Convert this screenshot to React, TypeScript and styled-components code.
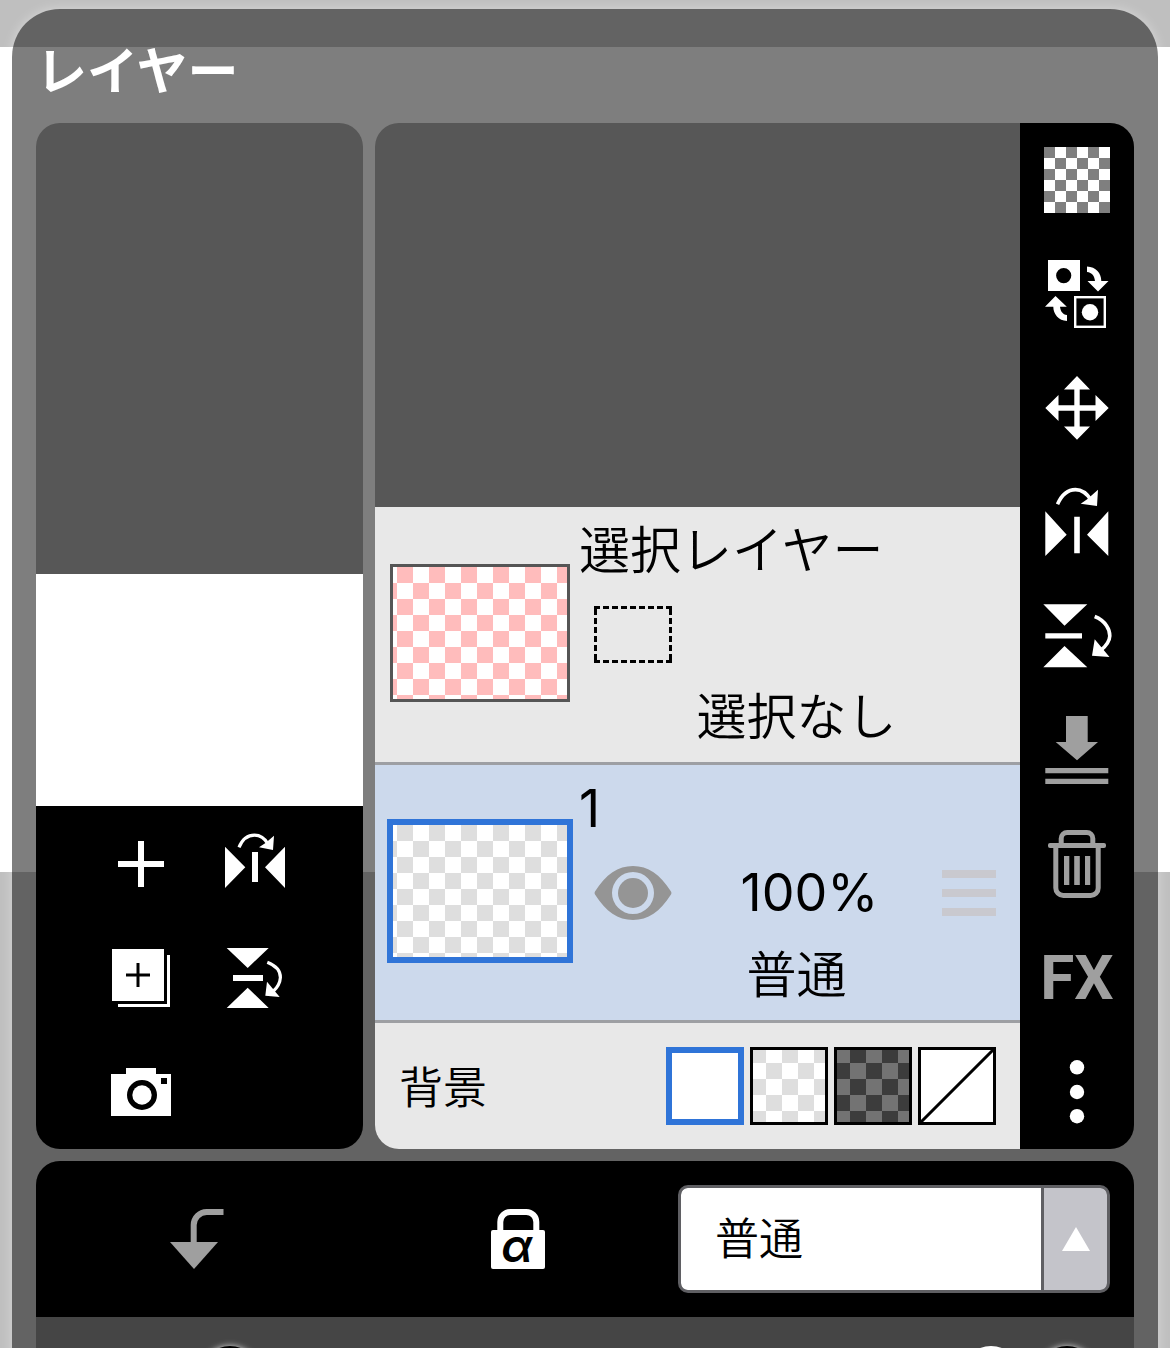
import React, { useState } from 'react';
import styled, { createGlobalStyle, css } from 'styled-components';

const GlobalStyle = createGlobalStyle`
  *, *::before, *::after { box-sizing: border-box; }
  body {
    margin: 0;
    font-family: Inter, "Noto Sans CJK JP", sans-serif;
    color: #000;
  }
  button, select, input { font: inherit; color: inherit; }
`;

const BLUE = '#2f74d8';
const MUTED = '#9f9f9f';

const checker = (a: string, b: string) =>
  `conic-gradient(${b} 25%, ${a} 0 50%, ${b} 0 75%, ${a} 0)`;

const Page = styled.div`
  height: 100vh;
  padding: 9px 12px 0;
  overflow: hidden;
  background: linear-gradient(#bfbfbf 47px, #fff 47px 872px, #bfbfbf 872px);
`;

const Panel = styled.main`
  min-height: 100%;
  padding: 0 24px;
  border-radius: 48px 48px 0 0;
  background: rgba(32, 32, 32, 0.58);
  box-shadow: 0 0 12px rgba(255, 255, 255, 0.4);
`;

const Title = styled.h1`
  margin: 0;
  padding: 27px 0 15px;
  font-size: 51px;
  line-height: 72px;
  font-weight: 700;
  color: #fff;
`;

const Workspace = styled.div`
  display: flex;
  gap: 12px;
`;

const PreviewColumn = styled.section`
  flex: 0 0 327px;
  display: flex;
  flex-direction: column;
  overflow: hidden;
  border-radius: 24px;
  background: #575757;
`;

const CanvasPreview = styled.div`
  height: 232px;
  margin-top: auto;
  background: #fff;
`;

const PreviewTools = styled.div`
  display: grid;
  grid-template-columns: 114px 114px;
  padding: 1px 48px 0;
  background: #000;
`;

const LayerCard = styled.section`
  flex: 1;
  min-width: 0;
  display: flex;
  overflow: hidden;
  border-radius: 24px;
  background: #575757;
`;

const LayerList = styled.div`
  flex: 1;
  min-width: 0;
  display: flex;
  flex-direction: column;
  justify-content: flex-end;
`;

const LayerRow = styled.article<{ $selected?: boolean }>`
  display: grid;
  grid-template-columns: 198px minmax(0, 1fr);
  border-bottom: 3px solid #9d9fa3;
  background: ${(p) => (p.$selected ? '#ccd9ec' : '#e8e8e8')};
`;

const Thumb = styled.button<{ $tint: string; $selected?: boolean }>`
  align-self: center;
  justify-self: end;
  width: ${(p) => (p.$selected ? 186 : 180)}px;
  height: ${(p) => (p.$selected ? 144 : 138)}px;
  margin-right: ${(p) => (p.$selected ? 0 : 3)}px;
  margin-bottom: 3px;
  padding: 0;
  border: ${(p) => (p.$selected ? `6px solid ${BLUE}` : '3px solid #555')};
  background: ${(p) => checker(p.$tint, '#fff')} 4px 0 / 32px 32px;
`;

const Details = styled.div`
  display: grid;
  grid-template-columns: 120px minmax(0, 1fr) 102px;
  grid-template-rows: 88px 79px 85px;
  align-items: center;
  justify-items: center;
  padding-bottom: 3px;
`;

const LayerName = styled.h2`
  grid-column: 1 / -1;
  justify-self: start;
  margin: 0;
  padding-left: 6px;
  font-size: 51px;
  line-height: 72px;
  font-weight: 350;
`;

const NumberText = styled.span`
  font-size: 52px;
  font-weight: 400;
`;

const TextButton = styled.button<{ $wide?: boolean }>`
  padding: 0;
  border: 0;
  background: none;
  font-size: 50px;
  line-height: 72px;
  font-weight: 350;
  ${(p) => p.$wide && css`grid-column: 1 / -1;`}
`;

const OpacityValue = styled(TextButton)`
  padding-left: 8px;
`;

const PlainButton = styled.button`
  display: flex;
  padding: 0;
  border: 0;
  background: none;
`;

const BackgroundRow = styled.fieldset`
  display: flex;
  align-items: center;
  gap: 6px;
  margin: 0;
  padding: 24px;
  border: 0;
  background: #e8e8e8;
`;

const BackgroundLabel = styled.span`
  margin-right: auto;
  padding-top: 4px;
  font-size: 44px;
  line-height: 72px;
  font-weight: 350;
`;

const swatchFill = {
  white: '#fff',
  light: `${checker('#dedede', '#fff')} 0 0 / 32px 32px border-box`,
  dark: `${checker('#737373', '#3c3c3c')} 0 0 / 32px 32px border-box`,
  none: 'linear-gradient(to bottom right, #fff calc(50% - 2px), #000 calc(50% - 1px) calc(50% + 1px), #fff calc(50% + 2px))',
};

type Fill = keyof typeof swatchFill;

const Swatch = styled.input<{ $fill: Fill }>`
  appearance: none;
  width: 78px;
  height: 78px;
  margin: 0;
  border: 3px solid #000;
  background: ${(p) => swatchFill[p.$fill]};
  &:checked { border: 6px solid ${BLUE}; }
`;

const ToolRail = styled.nav`
  display: flex;
  flex-direction: column;
  background: #000;
`;

const ToolButton = styled.button<{ $muted?: boolean }>`
  display: flex;
  align-items: center;
  justify-content: center;
  min-width: 114px;
  height: 114px;
  padding: 0;
  border: 0;
  background: none;
  color: ${(p) => (p.$muted ? MUTED : '#fff')};
`;

const Transparency = styled.span`
  width: 66px;
  height: 66px;
  background: ${checker('#7f7f7f', '#fff')} 0 0 / 22px 22px;
`;

const FxText = styled.span`
  font-family: Roboto, "Liberation Sans", sans-serif;
  font-size: 62px;
  line-height: 72px;
  font-weight: 700;
`;

const Controls = styled.section`
  margin-top: 12px;
  overflow: hidden;
  border-radius: 24px 24px 0 0;
  background: #454545;
`;

const ControlBar = styled.div`
  display: grid;
  grid-template-columns: 1fr 1fr 432px;
  align-items: center;
  justify-items: center;
  padding: 21px 24px 21px 0;
  background: #000;
`;

const SelectBox = styled.label`
  display: flex;
  width: 100%;
  height: 108px;
  overflow: hidden;
  border: 3px solid #5f5f63;
  border-radius: 10px;
  background: #5f5f63;
`;

const Select = styled.select`
  appearance: none;
  flex: 1;
  min-width: 0;
  padding: 0 34px;
  border: 0;
  border-radius: 6px 0 0 6px;
  background: #fff;
  font-size: 44px;
  font-weight: 350;
`;

const SelectArrow = styled.span`
  display: flex;
  align-items: center;
  justify-content: center;
  width: 63px;
  margin-left: 3px;
  border-radius: 0 6px 6px 0;
  background: #c4c4ca;
`;

const OpacityBar = styled.div`
  display: flex;
  align-items: center;
  gap: 16px;
  padding: 29px 37px 30px 164px;
`;

const StepButton = styled.button`
  flex: none;
  width: 60px;
  height: 60px;
  padding: 0;
  border: 0;
  border-radius: 50%;
  background: #000;
  box-shadow: 0 0 6px rgba(255, 255, 255, 0.8);
  color: #fff;
`;

const OpacityRange = styled.input`
  appearance: none;
  flex: 1;
  min-width: 0;
  height: 60px;
  margin: 0;
  background: linear-gradient(#8a8a8a, #8a8a8a) center / 100% 6px no-repeat;
  &::-webkit-slider-thumb {
    appearance: none;
    width: 60px;
    height: 60px;
    border-radius: 50%;
    background: #fff;
  }
`;

const Glyph = ({ children }: { children: React.ReactNode }) => (
  <svg width="72" height="72" viewBox="0 0 72 72" fill="currentColor" aria-hidden="true">
    {children}
  </svg>
);

const SwapIcon = () => (
  <Glyph>
    <path fillRule="evenodd" d="M7 2H39V33H7ZM22.7 10A7.6 7.6 0 1 0 22.7 25.2A7.6 7.6 0 1 0 22.7 10Z" />
    <path d="M46 8.5C55 9 60.3 15 60.3 23H67.5L57 33.5L46.5 23H54C53.5 18 51 14.5 46 14Z" />
    <path d="M14.5 38L25.8 48.7H19C19.5 53 21.5 56.5 26 57V63C17.5 62.5 12.3 56 12.3 48.7H4Z" />
    <rect x="34.2" y="39.2" width="29.6" height="29.6" fill="none" stroke="currentColor" strokeWidth="2.4" />
    <circle cx="49" cy="54.2" r="8.2" />
  </Glyph>
);

const MoveIcon = () => (
  <Glyph>
    <path d="M36 4L49 17.5H38.7V33.3H54.5V23L67.7 36L54.5 49V38.7H38.7V54.5H49L36 67.7L23 54.5H33.3V38.7H17.5V49L4.3 36L17.5 23V33.3H33.3V17.5H23Z" />
  </Glyph>
);

const FlipHIcon = () => (
  <Glyph>
    <path d="M4.3 25.3L25.7 48.7L4.3 70ZM67.3 25.3L46 48.7L67.3 70ZM33.2 30.7H38.8V67.3H33.2ZM57 3.7L56 20L39.7 17.7L46.5 13Z" />
    <path d="M16.5 18.3C21 8 27.5 3.6 34.5 3.6C41 3.6 46 7.5 50 14" fill="none" stroke="currentColor" strokeWidth="3.6" />
  </Glyph>
);

const FlipVIcon = () => (
  <Glyph>
    <path d="M2.3 4.3H46.3L23.5 25.7ZM23.5 46L46.3 67.2H2.3ZM4.3 33.2H41V38.6H4.3ZM53.7 39.3L68.5 57L51 55.7Z" />
    <path d="M53.7 16.5C65 21 69 30 68.8 36C68.5 42 65 46 60 50" fill="none" stroke="currentColor" strokeWidth="3.6" />
  </Glyph>
);

const MergeIcon = () => (
  <Glyph>
    <path d="M25 2H46.7V28H57L36 46.3L14.7 28H25ZM4.3 54H67.3V59.3H4.3ZM4.3 64.7H67.3V70H4.3Z" />
  </Glyph>
);

const TrashIcon = () => (
  <Glyph>
    <path
      d="M20.2 17V10.5A6 6 0 0 1 26.2 4.5H45.8A6 6 0 0 1 51.8 10.5V17M14.8 17V60A7.5 7.5 0 0 0 22.3 67.5H49.7A7.5 7.5 0 0 0 57.2 60V17"
      fill="none"
      stroke="currentColor"
      strokeWidth="5"
    />
    <rect x="7" y="15" width="58" height="5" rx="2" />
    <path d="M23 28H28.3V57H23ZM33.2 28H38.8V57H33.2ZM44 28H49.2V57H44Z" />
  </Glyph>
);

const MoreIcon = () => (
  <Glyph>
    <circle cx="36" cy="11.3" r="7.2" />
    <circle cx="36" cy="36" r="7.2" />
    <circle cx="36" cy="60.2" r="7.2" />
  </Glyph>
);

const PlusIcon = () => (
  <Glyph>
    <path d="M33 13H39V33H59V39H39V59H33V39H13V33H33Z" />
  </Glyph>
);

const CanvasFlipHIcon = () => (
  <Glyph>
    <path d="M6 18.7L26.3 39.3L6 60ZM66 18.7L46 39.3L66 60ZM33 24H39V54H33ZM55 7.7L54 22L40 19.3L46.5 15Z" />
    <path d="M20 19.3C24 10 30 7.2 35.5 7.2C41 7.2 45.5 10 49 16" fill="none" stroke="currentColor" strokeWidth="3.2" />
  </Glyph>
);

const CanvasFlipVIcon = () => (
  <Glyph>
    <path d="M7.7 6H49.7L28.7 26ZM28.7 45.7L49.7 66H7.7ZM14 33H44V39H14ZM48 39.7L60.7 55L46.3 53.7Z" />
    <path d="M48.3 20.2C58 24 61.5 30 61.4 35.5C61 42 58 46 54 49.5" fill="none" stroke="currentColor" strokeWidth="3.2" />
  </Glyph>
);

const DuplicateIcon = () => (
  <Glyph>
    <path fillRule="evenodd" d="M7 7H59V59H7ZM31.5 21V31.5H21V34.5H31.5V45H34.5V34.5H45V31.5H34.5V21Z" />
    <path d="M62 13H65V65H13V62H62Z" />
  </Glyph>
);

const CameraIcon = () => (
  <Glyph>
    <path fillRule="evenodd" d="M6 18H21V12H51V18H66V60H6ZM56 22V28H62V22ZM37 24A15 15 0 1 0 37 54A15 15 0 1 0 37 24Z" />
    <circle cx="37" cy="39" r="9.7" />
  </Glyph>
);

const ClipIcon = () => (
  <Glyph>
    <path d="M9 39H57L33 66Z" />
    <path d="M32.7 40V22A13 13 0 0 1 45.7 9H62.5" fill="none" stroke="currentColor" strokeWidth="6" />
  </Glyph>
);

const AlphaLockIcon = () => (
  <Glyph>
    <path d="M18.3 30V19A10 10 0 0 1 28.3 9H44.3A10 10 0 0 1 54.3 19V30" fill="none" stroke="currentColor" strokeWidth="6" />
    <rect x="9" y="27" width="54" height="39" rx="2" />
    <text x="35" y="59" textAnchor="middle" fill="#000" fontFamily="Inter, sans-serif" fontStyle="italic" fontWeight="600" fontSize="46">
      α
    </text>
  </Glyph>
);

const EyeIcon = () => (
  <svg width="78" height="56" viewBox="0 0 78 56" fill="#959595" aria-hidden="true">
    <path
      fillRule="evenodd"
      d="M1 26.5C12 9 24 1 39 1S66 9 77 26.5Q78 28 77 29.5C66 47 54 55 39 55S12 47 1 29.5Q0 28 1 26.5ZM39 7A21 21 0 1 0 39 49A21 21 0 1 0 39 7Z"
    />
    <circle cx="39" cy="28" r="15" />
  </svg>
);

const SelectionIcon = () => (
  <svg width="78" height="57" viewBox="0 0 78 57" fill="none" stroke="#000" strokeWidth="3" aria-hidden="true">
    <path d="M0 1.5H78M0 55.5H78" strokeDasharray="6 3" />
    <path d="M1.5 0V57M76.5 0V57" strokeDasharray="9 3 6 3 6 3 6 3 6 3 9 3" />
  </svg>
);

const HandleIcon = () => (
  <svg width="54" height="48" viewBox="0 0 54 48" fill="#c9c9cf" aria-hidden="true">
    <path d="M0 1H54V9H0ZM0 20H54V28H0ZM0 39H54V47H0Z" />
  </svg>
);

const previewTools = [
  { label: 'レイヤーを追加', Icon: PlusIcon },
  { label: 'キャンバスを左右反転', Icon: CanvasFlipHIcon },
  { label: 'レイヤーを複製', Icon: DuplicateIcon },
  { label: 'キャンバスを上下反転', Icon: CanvasFlipVIcon },
  { label: 'カメラ', Icon: CameraIcon },
];

const railTools = [
  { label: '透明', Icon: Transparency },
  { label: '入れ替え', Icon: SwapIcon },
  { label: '移動', Icon: MoveIcon },
  { label: '左右反転', Icon: FlipHIcon },
  { label: '上下反転', Icon: FlipVIcon },
  { label: '結合', Icon: MergeIcon, muted: true },
  { label: '削除', Icon: TrashIcon, muted: true },
  { label: 'FX', Icon: () => <FxText>FX</FxText>, muted: true },
  { label: 'その他', Icon: MoreIcon },
];

const backgrounds: { fill: Fill; label: string }[] = [
  { fill: 'white', label: '白' },
  { fill: 'light', label: '明るい格子' },
  { fill: 'dark', label: '暗い格子' },
  { fill: 'none', label: 'なし' },
];

export default function App() {
  const [background, setBackground] = useState<Fill>('white');

  return (
    <>
      <GlobalStyle />
      <Page lang="ja">
        <Panel>
          <Title>レイヤー</Title>
          <Workspace>
            <PreviewColumn>
              <CanvasPreview />
              <PreviewTools>
                {previewTools.map(({ label, Icon }) => (
                  <ToolButton key={label} type="button" aria-label={label}>
                    <Icon />
                  </ToolButton>
                ))}
              </PreviewTools>
            </PreviewColumn>
            <LayerCard>
              <LayerList>
                <LayerRow>
                  <Thumb type="button" aria-label="選択レイヤー" $tint="#ffbcbc" />
                  <Details>
                    <LayerName>選択レイヤー</LayerName>
                    <SelectionIcon />
                    <TextButton type="button" $wide>選択なし</TextButton>
                  </Details>
                </LayerRow>
                <LayerRow $selected>
                  <Thumb type="button" aria-label="レイヤー 1" $tint="#dedede" $selected />
                  <Details>
                    <LayerName><NumberText>1</NumberText></LayerName>
                    <PlainButton type="button" aria-label="表示">
                      <EyeIcon />
                    </PlainButton>
                    <OpacityValue type="button"><NumberText>100%</NumberText></OpacityValue>
                    <PlainButton type="button" aria-label="並べ替え">
                      <HandleIcon />
                    </PlainButton>
                    <TextButton type="button" $wide>普通</TextButton>
                  </Details>
                </LayerRow>
                <BackgroundRow aria-labelledby="background-label">
                  <BackgroundLabel id="background-label">背景</BackgroundLabel>
                  {backgrounds.map(({ fill, label }) => (
                    <Swatch
                      key={fill}
                      type="radio"
                      name="background"
                      aria-label={label}
                      $fill={fill}
                      checked={background === fill}
                      onChange={() => setBackground(fill)}
                    />
                  ))}
                </BackgroundRow>
              </LayerList>
              <ToolRail>
                {railTools.map(({ label, Icon, muted }) => (
                  <ToolButton key={label} type="button" aria-label={label} $muted={muted}>
                    <Icon />
                  </ToolButton>
                ))}
              </ToolRail>
            </LayerCard>
          </Workspace>
          <Controls>
            <ControlBar>
              <ToolButton type="button" aria-label="クリッピング" $muted>
                <ClipIcon />
              </ToolButton>
              <ToolButton type="button" aria-label="アルファロック">
                <AlphaLockIcon />
              </ToolButton>
              <SelectBox>
                <Select aria-label="合成モード" defaultValue="normal">
                  <option value="normal">普通</option>
                </Select>
                <SelectArrow>
                  <svg width="28" height="24" viewBox="0 0 28 24" fill="#fff" aria-hidden="true">
                    <path d="M14 0L28 24H0Z" />
                  </svg>
                </SelectArrow>
              </SelectBox>
            </ControlBar>
            <OpacityBar>
              <StepButton type="button" aria-label="不透明度を下げる" />
              <OpacityRange type="range" aria-label="不透明度" min={0} max={100} defaultValue={100} />
              <StepButton type="button" aria-label="不透明度を上げる" />
            </OpacityBar>
          </Controls>
        </Panel>
      </Page>
    </>
  );
}
